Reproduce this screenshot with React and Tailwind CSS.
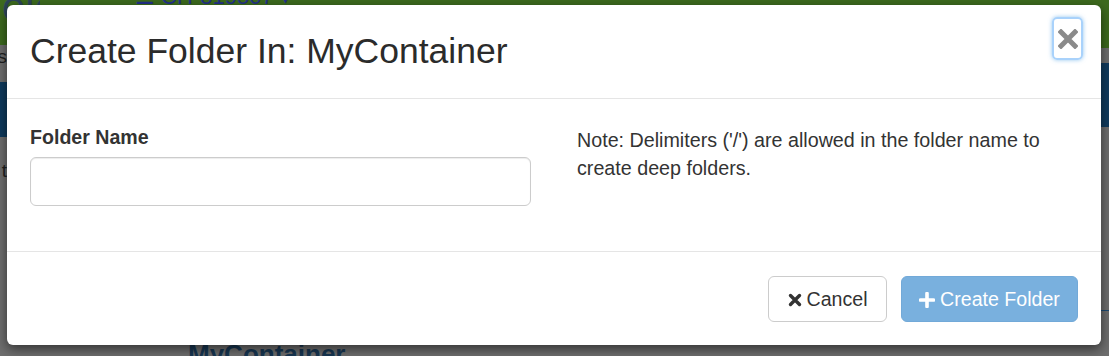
import React from 'react';

const CloseIcon = () => (
  <svg width="20" height="20" viewBox="0 0 20 20">
    <path d="M3 3 L17 17 M17 3 L3 17" stroke="#8a8a8a" strokeWidth="5" strokeLinecap="square" fill="none" />
  </svg>
);

const TimesIcon = () => (
  <svg width="14" height="14" viewBox="0 0 14 14">
    <path d="M2.5 2.5 L11.5 11.5 M11.5 2.5 L2.5 11.5" stroke="#333" strokeWidth="3.4" strokeLinecap="round" fill="none" />
  </svg>
);

const PlusIcon = () => (
  <svg width="16" height="16" viewBox="0 0 16 16">
    <path d="M8 1.5 V14.5 M1.5 8 H14.5" stroke="#fff" strokeWidth="3.6" strokeLinecap="round" fill="none" />
  </svg>
);

const App = () => {
  return (
    <div className="relative h-[356px] w-[1109px] overflow-hidden bg-[#6e6e6e] font-['Liberation_Sans',Arial,sans-serif]">
      {/* Page behind the dimmed backdrop */}
      <div className="flex h-full">
        <div className="flex w-[40px] flex-col">
          <div className="h-[45px] overflow-hidden bg-[#3d6a1e] pl-[2px] text-[42px] leading-none text-[#2c4458]">
            <span className="relative -top-[14px]">eleom</span>
          </div>
          <div className="flex h-[37px] justify-end overflow-hidden pr-[33px] text-[19px] text-[#1f1f1f]">
            <span className="-mt-[2px]">s</span>
          </div>
          <div className="h-[55px] bg-[#0f3a5d]"></div>
          <div className="flex flex-1 justify-end pr-[33px] text-[19px] text-[#1f1f1f]">
            <span className="mt-[20px]">t</span>
          </div>
        </div>
        <div className="flex flex-1 flex-col">
          <div className="h-[45px] overflow-hidden bg-[#3d6a1e] pl-[95px] text-[22px] leading-none text-[#23308a]">
            <span className="relative -top-[14px]">☰ CH-819507 ▾</span>
          </div>
          <div className="h-[37px]"></div>
          <div className="h-[55px] bg-[#0f3a5d]"></div>
          <div className="flex-1"></div>
          <div className="h-[16px] overflow-hidden pl-[148px] text-[26px] font-bold leading-none text-[#173652]">
            <span className="relative top-[1px]">MyContainer</span>
          </div>
        </div>
        <div className="flex w-[40px] flex-col">
          <div className="h-[48px] bg-[#3d6a1e]"></div>
          <div className="h-[15px]"></div>
          <div className="h-[64px] bg-[#0f3a5d]"></div>
          <div className="h-[183px]"></div>
          <div className="h-[1px] bg-[#1d4a72]"></div>
          <div className="flex-1"></div>
        </div>
      </div>

      {/* Modal dialog */}
      <div className="absolute left-[7px] top-[5px] flex h-[340px] w-[1094px] flex-col rounded-[6px] bg-white shadow-[0_4px_12px_rgba(0,0,0,0.55)]">
        <div className="flex h-[94px] items-start justify-between border-b border-[#e5e5e5] pl-[23px] pr-[18px]">
          <h3 className="mt-[24px] text-[35.5px] font-normal leading-[44px] text-[#2b2b2b]">Create Folder In: MyContainer</h3>
          <button className="mt-[12px] flex h-[43px] w-[31px] items-center justify-center rounded-[5px] border-2 border-[#a9d2fb] shadow-[0_0_4px_rgba(102,175,233,0.7)]">
            <CloseIcon />
          </button>
        </div>

        <div className="grid h-[153px] grid-cols-[501px_501px] gap-x-[46px] border-b border-[#e5e5e5] px-[23px] pt-[24px]">
          <div className="flex flex-col">
            <label className="text-[19.6px] font-bold leading-[28px] text-[#333]">Folder Name</label>
            <input className="mt-[6px] h-[49px] w-full rounded-[6px] border border-[#cccccc] px-[17px] text-[19.6px] shadow-[inset_0_1px_1px_rgba(0,0,0,0.075)] outline-none" />
          </div>
          <p className="mt-[3px] text-[19.7px] leading-[28px] text-[#333]">
            Note: Delimiters ('/') are allowed in the folder name to create deep folders.
          </p>
        </div>

        <div className="flex flex-1 items-start justify-end gap-[14px] pr-[23px] pt-[24px]">
          <button className="flex h-[46px] w-[119px] items-center justify-center gap-[5px] rounded-[6px] border border-[#cccccc] bg-white pt-[2px] text-[19.6px] text-[#333]">
            <TimesIcon />
            <span>Cancel</span>
          </button>
          <button className="flex h-[46px] w-[177px] items-center justify-center gap-[5px] rounded-[6px] border border-[#72a9d8] bg-[#79b0de] pt-[2px] text-[19.6px] text-white">
            <PlusIcon />
            <span>Create Folder</span>
          </button>
        </div>
      </div>
    </div>
  );
};

export default App;
